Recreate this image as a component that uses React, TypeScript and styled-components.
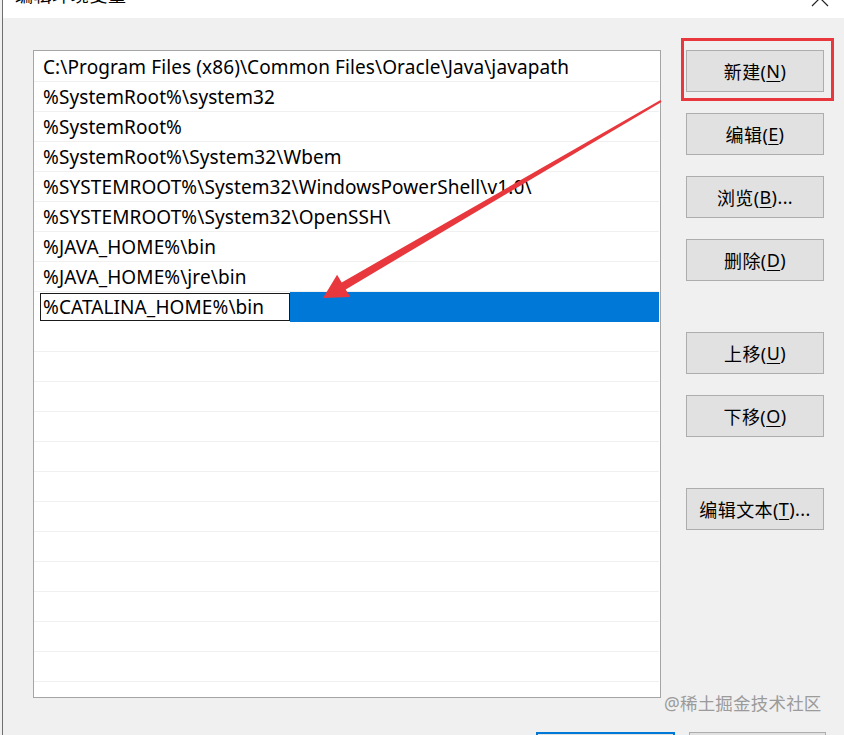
import React from "react";
import styled, { createGlobalStyle } from "styled-components";

const Global = createGlobalStyle`
  html, body { margin: 0; padding: 0; background: #f0f0f0; overflow: hidden; }
  body { font-family: "Noto Sans", "Noto Sans CJK SC", sans-serif; }
  * { box-sizing: border-box; }
`;

const Page = styled.div`
  position: relative;
  width: 844px;
  height: 735px;
  overflow: hidden;
  background: #f0f0f0;
  padding-left: 2px;
`;

const Window = styled.div`
  height: 100%;
  border-left: 1px solid #6e6e6e;
  display: flex;
  flex-direction: column;
`;

const TitleBar = styled.div`
  position: relative;
  height: 18px;
  background: #ffffff;
  overflow: hidden;
  flex-shrink: 0;
`;

const TitleText = styled.div`
  margin: -17px 0 0 12px;
  font-size: 18px;
  line-height: 24px;
  color: #000;
  letter-spacing: 0.6px;
`;

const CloseIcon = styled.svg`
  position: absolute;
  right: 14px;
  top: -12px;
`;

const Body = styled.div`
  flex: 1;
  display: flex;
  padding: 32px 0 0 30px;
  gap: 25px;
`;

const ListBox = styled.div`
  width: 628px;
  height: 648px;
  background: #fff;
  border: 1px solid #a5a5a5;
  padding: 1px 1px 0 0;
  overflow: hidden;
  flex-shrink: 0;
`;

const Row = styled.div`
  height: 30px;
  border-bottom: 1px solid #f0f0f0;
  display: flex;
  align-items: center;
  padding-left: 9px;
  font-size: 19px;
  color: #000;
  white-space: nowrap;
  letter-spacing: 0.1px;
`;

const SelectedRow = styled.div`
  height: 30px;
  display: flex;
  align-items: stretch;
  padding: 1px 0 1px 6px;
  background: #fff;
`;

const EditBox = styled.div`
  width: 250px;
  border: 1px solid #1a1a1a;
  background: #fff;
  display: flex;
  align-items: center;
  padding-left: 2px;
  font-size: 19px;
  letter-spacing: 0.1px;
  color: #000;
  white-space: nowrap;
  overflow: hidden;
`;

const SelectFill = styled.div`
  flex: 1;
  background: #0078d7;
  margin: -1px 0;
`;

const ButtonColumn = styled.div`
  display: flex;
  flex-direction: column;
  width: 138px;
`;

const Btn = styled.div<{ $top: number }>`
  position: relative;
  margin-top: ${(p) => p.$top}px;
  height: 42px;
  background: #e1e1e1;
  border: 1px solid #adadad;
  display: flex;
  align-items: center;
  justify-content: center;
  font-size: 18px;
  letter-spacing: 0.4px;
  color: #000;
  white-space: nowrap;
`;

const Highlight = styled.div`
  position: absolute;
  left: -6px;
  right: -11px;
  top: -13px;
  bottom: -10px;
  border: 3px solid #e8383d;
  pointer-events: none;
`;

const U = styled.span`
  text-decoration: underline;
  text-underline-offset: 3px;
  text-decoration-thickness: 1px;
`;

const Footer = styled.div`
  height: 3px;
  flex-shrink: 0;
  display: flex;
  justify-content: flex-end;
  gap: 14px;
  padding-right: 18px;
`;

const FooterBtn = styled.div<{ $primary?: boolean }>`
  width: ${(p) => (p.$primary ? 139 : 137)}px;
  height: 42px;
  background: #e1e1e1;
  border: ${(p) => (p.$primary ? "2px solid #0078d7" : "1px solid #adadad")};
`;

const Watermark = styled.div`
  position: absolute;
  left: 664px;
  top: 690px;
  font-size: 17.5px;
  line-height: 26px;
  color: #9b9b9b;
  white-space: nowrap;
  letter-spacing: 0.2px;
`;

const ArrowSvg = styled.svg`
  position: absolute;
  left: 0;
  top: 0;
  pointer-events: none;
`;

const paths = [
  "C:\\Program Files (x86)\\Common Files\\Oracle\\Java\\javapath",
  "%SystemRoot%\\system32",
  "%SystemRoot%",
  "%SystemRoot%\\System32\\Wbem",
  "%SYSTEMROOT%\\System32\\WindowsPowerShell\\v1.0\\",
  "%SYSTEMROOT%\\System32\\OpenSSH\\",
  "%JAVA_HOME%\\bin",
  "%JAVA_HOME%\\jre\\bin",
];

const buttons: { label: string; key: string; tail?: string; top: number; hl?: boolean }[] = [
  { label: "新建", key: "N", top: 0, hl: true },
  { label: "编辑", key: "E", top: 21 },
  { label: "浏览", key: "B", tail: "...", top: 21 },
  { label: "删除", key: "D", top: 21 },
  { label: "上移", key: "U", top: 51 },
  { label: "下移", key: "O", top: 21 },
  { label: "编辑文本", key: "T", tail: "...", top: 51 },
];

export default function App() {
  const emptyRows = Array.from({ length: 13 });
  return (
    <>
      <Global />
      <Page>
        <Window>
          <TitleBar>
            <TitleText>编辑环境变量</TitleText>
            <CloseIcon width="20" height="20" viewBox="0 0 20 20">
              <path d="M2 2 L18 18 M18 2 L2 18" stroke="#222" strokeWidth="1.2" fill="none" />
            </CloseIcon>
          </TitleBar>
          <Body>
            <ListBox>
              {paths.map((p) => (
                <Row key={p}>{p}</Row>
              ))}
              <SelectedRow>
                <EditBox>%CATALINA_HOME%\bin</EditBox>
                <SelectFill />
              </SelectedRow>
              {emptyRows.map((_, i) => (
                <Row key={"e" + i} />
              ))}
            </ListBox>
            <ButtonColumn>
              {buttons.map((b) => (
                <Btn key={b.label} $top={b.top}>
                  {b.label}(<U>{b.key}</U>){b.tail}
                  {b.hl && <Highlight />}
                </Btn>
              ))}
            </ButtonColumn>
          </Body>
          <Footer>
            <FooterBtn $primary />
            <FooterBtn />
          </Footer>
        </Window>
        <Watermark>@稀土掘金技术社区</Watermark>
        <ArrowSvg width="844" height="735" viewBox="0 0 844 735">
          <polygon
            points="323,298 337.1,274.7 341.7,282.4 660.5,100.1 661.5,101.9 345.7,289.4 350.3,297.1"
            fill="#e8383d"
          />
        </ArrowSvg>
      </Page>
    </>
  );
}
